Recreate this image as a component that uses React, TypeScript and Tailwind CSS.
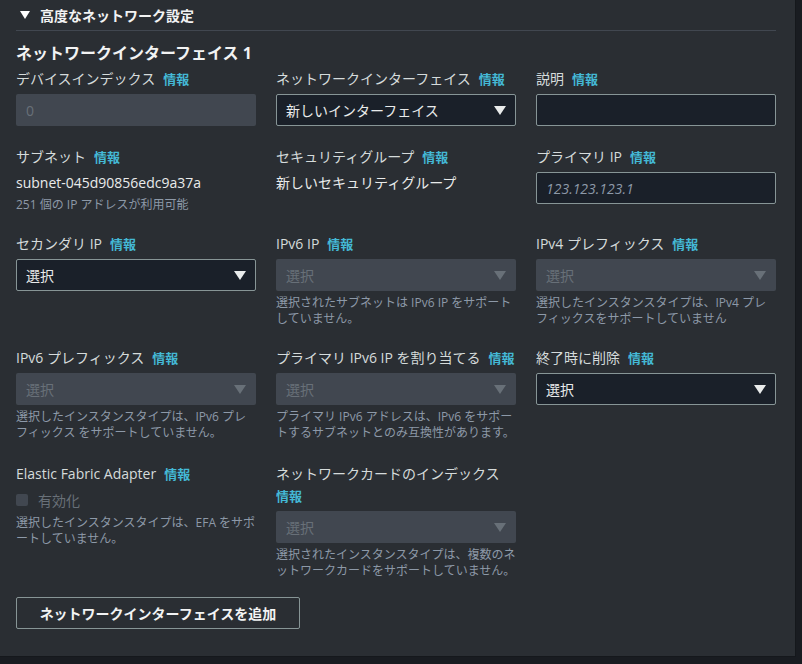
import React from "react";

const FONT = { fontFamily: '"Open Sans", "Noto Sans CJK JP", sans-serif' };

function Info() {
  return <span className="ml-2 font-bold text-[13px] text-[#44b9d6]">情報</span>;
}

function Label({ children, info = true }: { children: React.ReactNode; info?: boolean }) {
  return (
    <div className="text-[14px] leading-[22px] text-[#d5dbdb] mb-1">
      {children}
      {info && <Info />}
    </div>
  );
}

function Arrow({ disabled }: { disabled?: boolean }) {
  return (
    <svg width="12" height="9" viewBox="0 0 12 9" className="shrink-0">
      <polygon points="0,0 12,0 6,9" fill={disabled ? "#687078" : "#e9ebeb"} />
    </svg>
  );
}

function Select({ text, disabled }: { text: string; disabled?: boolean }) {
  return disabled ? (
    <div className="h-8 rounded-[2px] bg-[#414750] flex items-center justify-between pl-[10px] pr-[10px] text-[14px] text-[#687078]">
      <span>{text}</span>
      <Arrow disabled />
    </div>
  ) : (
    <div className="h-8 rounded-[2px] bg-[#1a2029] border border-[#879596] flex items-center justify-between pl-[9px] pr-[9px] text-[14px] text-[#e9ebeb]">
      <span>{text}</span>
      <Arrow />
    </div>
  );
}

function Desc({ lines }: { lines: string[] }) {
  return (
    <div className="mt-1 text-[12px] leading-[16px] text-[#8d99a8] whitespace-nowrap">
      {lines.map((l, i) => (
        <div key={i}>{l}</div>
      ))}
    </div>
  );
}

export default function App() {
  return (
    <div className="w-[802px] h-[664px] bg-[#191c21]" style={FONT}>
      <div className="w-[796px] h-[657px] bg-[#2a2e33] border-r border-b border-[#15181c] pl-4">
        <div className="w-[760px] h-[31px] border-b border-[#414750] flex items-center pl-1 gap-[10px]">
          <svg width="10" height="8" viewBox="0 0 10 8">
            <polygon points="0,0 10,0 5,8" fill="#ffffff" />
          </svg>
          <span className="text-[14px] font-bold text-[#f2f3f3]">高度なネットワーク設定</span>
        </div>
        <div className="w-[760px] pt-[11px]">
          <div className="text-[16px] leading-[22px] font-bold text-[#f2f3f3]">ネットワークインターフェイス 1</div>
          <div className="mt-[4px] grid grid-cols-3 gap-x-5 gap-y-5">
            {/* Row 1 */}
            <div>
              <Label>デバイスインデックス</Label>
              <div className="h-8 rounded-[2px] bg-[#414750] flex items-center pl-[10px] text-[14px] text-[#687078]">0</div>
            </div>
            <div>
              <Label>ネットワークインターフェイス</Label>
              <Select text="新しいインターフェイス" />
            </div>
            <div>
              <Label>説明</Label>
              <div className="h-8 rounded-[2px] bg-[#1a2029] border border-[#879596]" />
            </div>
            {/* Row 2 */}
            <div>
              <Label>サブネット</Label>
              <div className="mt-[5px] text-[14px] leading-[20px] text-[#e9ebeb]">subnet-045d90856edc9a37a</div>
              <div className="mt-1 text-[12px] leading-[16px] text-[#8d99a8]">251 個の IP アドレスが利用可能</div>
            </div>
            <div>
              <Label>セキュリティグループ</Label>
              <div className="mt-[5px] text-[14px] leading-[20px] text-[#e9ebeb]">新しいセキュリティグループ</div>
            </div>
            <div>
              <Label>プライマリ IP</Label>
              <div className="h-8 rounded-[2px] bg-[#1a2029] border border-[#879596] flex items-center pl-[9px] text-[14px] italic text-[#8d99a8]">
                123.123.123.1
              </div>
            </div>
            {/* Row 3 */}
            <div>
              <Label>セカンダリ IP</Label>
              <Select text="選択" />
            </div>
            <div>
              <Label>IPv6 IP</Label>
              <Select text="選択" disabled />
              <Desc lines={["選択されたサブネットは IPv6 IP をサポート", "していません。"]} />
            </div>
            <div>
              <Label>IPv4 プレフィックス</Label>
              <Select text="選択" disabled />
              <Desc lines={["選択したインスタンスタイプは、IPv4 プレ", "フィックスをサポートしていません"]} />
            </div>
            {/* Row 4 */}
            <div>
              <Label>IPv6 プレフィックス</Label>
              <Select text="選択" disabled />
              <Desc lines={["選択したインスタンスタイプは、IPv6 プレ", "フィックス をサポートしていません。"]} />
            </div>
            <div>
              <Label>プライマリ IPv6 IP を割り当てる</Label>
              <Select text="選択" disabled />
              <Desc lines={["プライマリ IPv6 アドレスは、IPv6 をサポー", "トするサブネットとのみ互換性があります。"]} />
            </div>
            <div>
              <Label>終了時に削除</Label>
              <Select text="選択" />
            </div>
            {/* Row 5 */}
            <div className="pt-[2px]">
              <Label>Elastic Fabric Adapter</Label>
              <div className="flex items-center gap-[10px] h-[22px]">
                <div className="w-3 h-3 rounded-[2px] bg-[#414750]" />
                <span className="text-[14px] text-[#687078]">有効化</span>
              </div>
              <Desc lines={["選択したインスタンスタイプは、EFA をサポ", "ートしていません。"]} />
            </div>
            <div className="pt-[2px]">
              <div className="text-[14px] leading-[22px] text-[#d5dbdb] mb-1">
                ネットワークカードのインデックス
                <br />
                <span className="font-bold text-[13px] text-[#44b9d6]">情報</span>
              </div>
              <Select text="選択" disabled />
              <Desc lines={["選択されたインスタンスタイプは、複数のネ", "ットワークカードをサポートしていません。"]} />
            </div>
            <div />
          </div>
          <button className="mt-[18px] w-[284px] h-8 rounded-[2px] border border-[#879596] text-[14px] font-bold text-[#f2f3f3] flex items-center justify-center">
            ネットワークインターフェイスを追加
          </button>
        </div>
      </div>
    </div>
  );
}
